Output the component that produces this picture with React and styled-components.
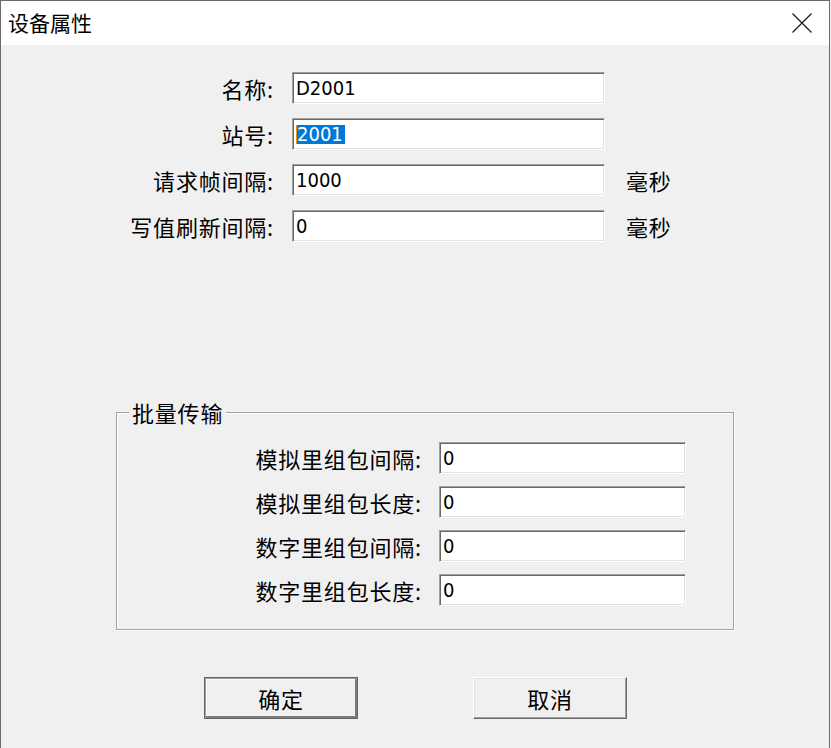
import React from 'react';
import styled, { createGlobalStyle } from 'styled-components';

const GlobalStyle = createGlobalStyle`
  html, body {
    margin: 0;
    padding: 0;
    background: #f0f0f0;
  }
  body {
    font-family: "Noto Sans CJK SC", "Noto Sans", sans-serif;
  }
`;

const Window = styled.div`
  width: 830px;
  height: 748px;
  box-sizing: border-box;
  border: 1px solid #6b6b6b;
  border-bottom: none;
  background: #f0f0f0;
  display: flex;
  flex-direction: column;
  font-family: "Noto Sans CJK SC", "Noto Sans", sans-serif;
  color: #000;
`;

const TitleBar = styled.div`
  flex: none;
  height: 44px;
  background: #fff;
  display: flex;
  align-items: center;
  justify-content: space-between;
  padding-left: 7px;
`;

const Title = styled.div`
  font-size: 21px;
  line-height: 1;
  margin-top: -2px;
`;

const CloseButton = styled.div`
  width: 47px;
  height: 44px;
  margin-right: 4px;
  display: flex;
  align-items: center;
  justify-content: center;
`;

const Body = styled.div`
  flex: 1;
  display: flex;
  flex-direction: column;
  padding-top: 27px;
`;

const FieldGrid = styled.div`
  display: grid;
  grid-template-columns: ${(p) => p.$cols};
  row-gap: ${(p) => p.$gap}px;
  align-items: center;
`;

const Label = styled.label`
  text-align: right;
  padding-right: ${(p) => p.$pad}px;
  font-size: 22px;
  letter-spacing: 0.8px;
  line-height: 1;
  white-space: nowrap;
`;

const Edit = styled.div`
  height: 32px;
  box-sizing: border-box;
  background: #fff;
  border: 1px solid;
  border-color: #a0a0a0 #fff #fff #a0a0a0;
  box-shadow: inset 1px 1px 0 #696969, inset -1px -1px 0 #e3e3e3;
  display: flex;
  align-items: center;
  padding-left: 3px;
  font-family: "DejaVu Sans Condensed", "DejaVu Sans", sans-serif;
  font-stretch: condensed;
  font-size: 20px;
  line-height: 1;
  white-space: nowrap;
  overflow: hidden;
`;

const Selected = styled.span`
  background: #0078d7;
  color: #fff;
  border-left: 1px solid #ff8c00;
  padding: 1px 2px 1px 0;
  line-height: 17px;
`;

const Unit = styled.span`
  margin-left: 21px;
  font-size: 22px;
  letter-spacing: 0.8px;
  line-height: 1;
`;

const Group = styled.div`
  position: relative;
  margin: 170px 0 0 115px;
  width: 618px;
  box-sizing: border-box;
  border: 1px solid #a0a0a0;
  box-shadow: inset 1px 1px 0 #fff, 1px 1px 0 #fff;
  padding: 29px 0 23px 0;
`;

const Legend = styled.span`
  position: absolute;
  top: -14px;
  left: 12px;
  padding: 0 3px;
  background: #f0f0f0;
  font-size: 22px;
  letter-spacing: 0.8px;
  line-height: 26px;
`;

const ButtonRow = styled.div`
  display: flex;
  gap: 115px;
  margin-top: 47px;
  padding-left: 203px;
`;

const Button = styled.button`
  width: 154px;
  height: 42px;
  box-sizing: border-box;
  background: #f0f0f0;
  font-family: "Noto Sans CJK SC", "Noto Sans", sans-serif;
  font-size: 22px;
  letter-spacing: 0.8px;
  line-height: 1;
  color: #000;
  padding: 0;
  border: 1px solid;
  border-color: ${(p) => (p.$default ? '#646464' : '#fff #696969 #696969 #fff')};
  box-shadow: ${(p) =>
    p.$default
      ? 'inset 1px 1px 0 #a0a0a0, inset -2px -2px 0 #7a7a7a, inset 2px 2px 0 #f8f8f8'
      : 'inset -1px -1px 0 #a0a0a0, inset 1px 1px 0 #e3e3e3'};
`;

const topFields = [
  { label: '名称:', value: 'D2001' },
  { label: '站号:', value: '2001', selected: true },
  { label: '请求帧间隔:', value: '1000', unit: '毫秒' },
  { label: '写值刷新间隔:', value: '0', unit: '毫秒' },
];

const batchFields = [
  { label: '模拟里组包间隔:', value: '0' },
  { label: '模拟里组包长度:', value: '0' },
  { label: '数字里组包间隔:', value: '0' },
  { label: '数字里组包长度:', value: '0' },
];

export default function App() {
  return (
    <>
      <GlobalStyle />
      <Window>
        <TitleBar>
          <Title>设备属性</Title>
          <CloseButton>
            <svg width="20" height="20" viewBox="0 0 20 20">
              <path d="M0.5 0.5 L19.5 19.5 M19.5 0.5 L0.5 19.5" stroke="#1a1a1a" strokeWidth="1.2" fill="none" />
            </svg>
          </CloseButton>
        </TitleBar>
        <Body>
          <FieldGrid $cols="291px 313px auto" $gap={14}>
            {topFields.map((f) => (
              <React.Fragment key={f.label}>
                <Label $pad={18}>{f.label}</Label>
                <Edit>{f.selected ? <Selected>{f.value}</Selected> : f.value}</Edit>
                {f.unit ? <Unit>{f.unit}</Unit> : <span />}
              </React.Fragment>
            ))}
          </FieldGrid>
          <Group>
            <Legend>批量传输</Legend>
            <FieldGrid $cols="322px 247px" $gap={12}>
              {batchFields.map((f) => (
                <React.Fragment key={f.label}>
                  <Label $pad={17}>{f.label}</Label>
                  <Edit>{f.value}</Edit>
                </React.Fragment>
              ))}
            </FieldGrid>
          </Group>
          <ButtonRow>
            <Button $default>确定</Button>
            <Button>取消</Button>
          </ButtonRow>
        </Body>
      </Window>
    </>
  );
}
